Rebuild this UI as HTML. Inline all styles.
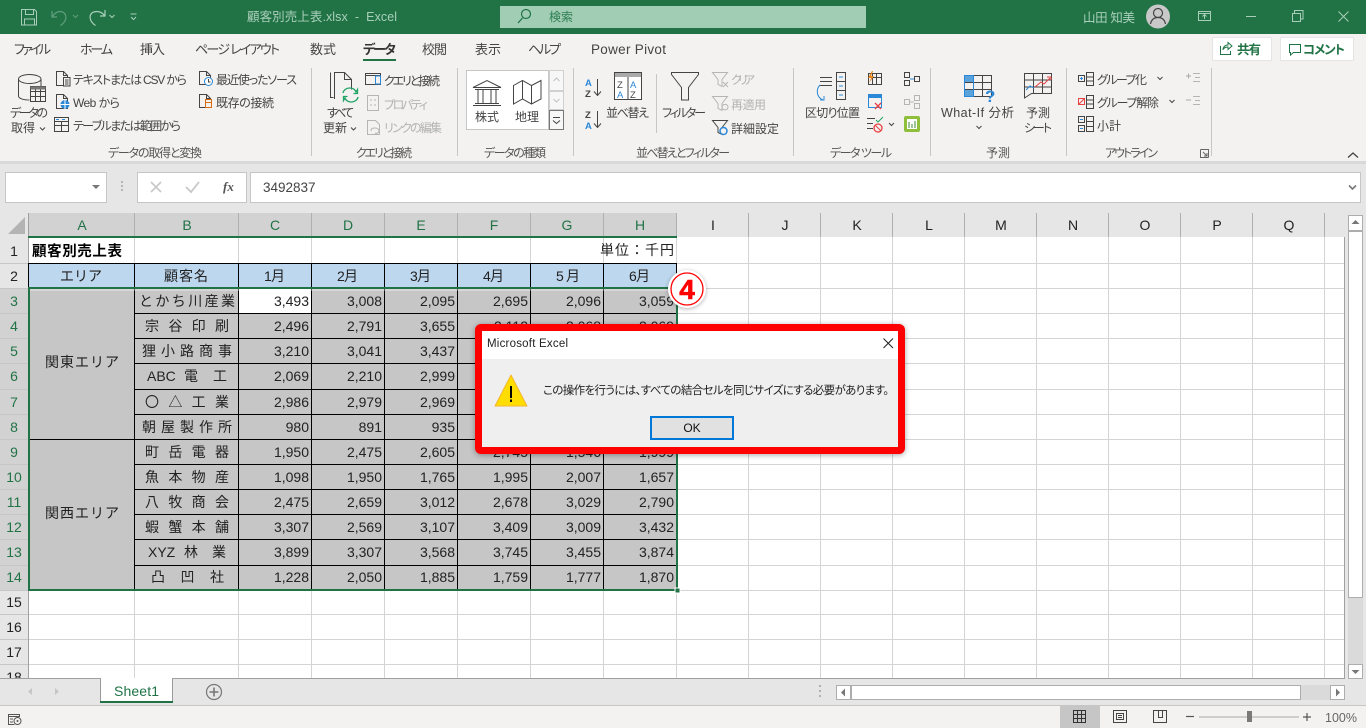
<!DOCTYPE html>
<html lang="ja"><head><meta charset="utf-8"><title>顧客別売上表.xlsx - Excel</title>
<style>
html,body{margin:0;padding:0;width:1366px;height:728px;overflow:hidden;background:#e6e6e6}
svg{display:block;position:absolute;left:0;top:0}
text{font-family:"Liberation Sans","Noto Sans CJK JP",sans-serif;font-size:12px;fill:#444;white-space:pre}
.tab{font-size:13px;fill:#444;font-feature-settings:"palt"}
.r{font-size:12px;fill:#444;font-feature-settings:"palt"}
.g{font-size:12px;fill:#b3b3b3;font-feature-settings:"palt"}
.l{font-size:12px;fill:#555;font-feature-settings:"palt"}
.h{font-size:14px;fill:#222;text-anchor:middle}
.hs{font-size:14px;fill:#217346;text-anchor:middle}
.n{font-size:14px;fill:#222;text-anchor:end}
.c{font-size:14px;fill:#222}
.i{fill:none;stroke:#444;stroke-width:1}
.b{fill:none;stroke:#2b88d8;stroke-width:1}
.m{fill:none;stroke:#b5b5b5;stroke-width:1}
.t{fill:none;stroke:#a9cfba;stroke-width:1}
</style></head><body>
<svg width="1366" height="728" viewBox="0 0 1366 728" xmlns="http://www.w3.org/2000/svg">
<!-- Title bar -->
<rect width="1366" height="34" fill="#217346"/>
<path class="t" d="M21.500 9.500h13l2 2v13.500h-15zM25.500 9.500v5h8v-5M24.500 25v-6h10v6"/>
<path fill="none" stroke="#5f9e7e" stroke-width="1.200" d="M52 11v6h5M52.500 16.500c3-5 8-6 11-4 4 3 3 9-3 13"/>
<path fill="none" stroke="#5f9e7e" d="M73 15l2.500 2.500 2.500-2.500"/>
<path fill="none" stroke="#a9cfba" stroke-width="1.200" d="M105 10v6h-5M104.500 15.500c-3-4-8-5-12-3-4 3-3 9 3 13"/>
<path fill="none" stroke="#a9cfba" d="M109.500 15l2.500 2.500 2.500-2.500M130.500 14h6M131 17l2.500 2.500 2.500-2.500"/>
<text x="247" y="21" textLength="150" style="font-size:12.500px;fill:#a9cfba">顧客別売上表.xlsx  -  Excel</text>
<rect x="500" y="6" width="366" height="22" fill="#a0cdb3"/>
<circle cx="526" cy="14" r="4.500" fill="none" stroke="#217346" stroke-width="1.200"/><path d="M522.500 18l-4.500 5" stroke="#217346" stroke-width="1.300"/>
<text x="549" y="21" style="font-size:12px;fill:#2c7d52">検索</text>
<text x="1083" y="22" textLength="52" style="font-size:12.500px;fill:#a9cfba">山田 知美</text>
<circle cx="1158" cy="16.500" r="12" fill="#c8c8c8"/>
<circle cx="1158" cy="13" r="4.500" fill="none" stroke="#444" stroke-width="1.200"/><path d="M1150.500 24c1-5 4-6.500 7.500-6.500s6.500 1.500 7.500 6.500" fill="none" stroke="#444" stroke-width="1.200"/>
<path class="t" d="M1198.500 11.500h12v9h-12zM1198.500 13.500h12M1204.500 19v-4M1202.500 16.500l2-2 2 2"/>
<path class="t" d="M1246 16.500h10"/>
<path class="t" d="M1292.500 13.500h8v8h-8zM1294.500 13v-2.500h8.500v8.500h-2.500"/>
<path class="t" d="M1338.500 11.500l10 10M1348.500 11.500l-10 10"/>
<!-- Ribbon -->
<rect y="34" width="1366" height="127" fill="#f3f2f1"/>
<rect y="161" width="1366" height="3" fill="#d9d9d9"/>
<text class="tab" x="14" y="54" textLength="37">ファイル</text>
<text class="tab" x="80" y="54" textLength="33">ホーム</text>
<text class="tab" x="140" y="54" textLength="25">挿入</text>
<text class="tab" x="195" y="54" textLength="85">ページ レイアウト</text>
<text class="tab" x="310" y="54" textLength="26">数式</text>
<text class="tab" x="363" y="54" textLength="33" style="font-weight:700;fill:#333">データ</text>
<rect x="363" y="59" width="33" height="2" fill="#217346"/>
<text class="tab" x="422" y="54" textLength="25">校閲</text>
<text class="tab" x="475" y="54" textLength="26">表示</text>
<text class="tab" x="528" y="54" textLength="33">ヘルプ</text>
<text class="tab" x="591" y="54" textLength="75" style="font-size:13.500px">Power Pivot</text>
<rect x="1212.500" y="37.500" width="59" height="23" rx="1" fill="#fff" stroke="#e4e4e4"/>
<path fill="none" stroke="#217346" d="M1220.500 46v8.500h10V51M1223 50c0-3 2-5 5-5v-2.500l4 3.500-4 3.500v-2.500c-2 0-4 1-5 2.500z"/>
<text x="1237" y="54" textLength="24" style="font-size:12.500px;font-weight:700;fill:#217346">共有</text>
<rect x="1280.500" y="37.500" width="73" height="23" rx="1" fill="#fff" stroke="#e4e4e4"/>
<path fill="none" stroke="#217346" d="M1289.500 44.500h11v8h-7l-3 2.500v-2.500h-1z"/>
<text x="1303" y="54" textLength="42" style="font-size:12.500px;font-weight:700;fill:#217346;font-feature-settings:'palt'">コメント</text>
<path fill="#c6c6c6" d="M311 68h1v88h-1zM457 68h1v88h-1zM573 68h1v88h-1zM793 68h1v88h-1zM930 68h1v88h-1zM1066 68h1v88h-1zM1211 68h1v88h-1zM656 74h1v59h-1z"/>
<!-- group labels -->
<text class="l" x="108" y="157" textLength="94">データの取得と変換</text>
<text class="l" x="356" y="157" textLength="56">クエリと接続</text>
<text class="l" x="484" y="157" textLength="62">データの種類</text>
<text class="l" x="636" y="157" textLength="94">並べ替えとフィルター</text>
<text class="l" x="830" y="157" textLength="62">データ ツール</text>
<text class="l" x="986" y="157" textLength="24">予測</text>
<text class="l" x="1105" y="157" textLength="53">アウトライン</text>
<path fill="none" stroke="#666" d="M1200.500 149.500h8v8M1200.500 149.500v8h8M1203 152l4 4M1207 153v3h-3"/>
<path fill="none" stroke="#444" stroke-width="1.300" d="M1348 157.500l5-4.500 5 4.500"/>
<!-- get data -->
<path class="i" d="M18.500 79v17c0 2.500 5 4 11 4M18.500 79c0-2.500 5-4.500 11-4.500s11.500 2 11.500 4.500-5.500 4.500-11.500 4.500-11-2-11-4.500zM41 79v7"/>
<path class="i" style="fill:#f3f2f1" d="M30.500 86.500h15v15h-15zM30.500 91.500h15M30.500 96.500h15M35.500 86.500v15M40.500 86.500v15"/>
<path d="M30.500 86.500h15v3h-15z" fill="#777"/>
<text class="r" x="10" y="117" textLength="38">データの</text>
<text class="r" x="11" y="132" textLength="24">取得</text>
<path class="i" d="M40 127.500l2.500 2.500 2.500-2.500"/>
<path class="i" d="M56.500 71.500h7l4 4v10h-11zM63.500 71.500v4h4"/><path class="i" d="M63.500 77.500h6.500v8.500h-6.500zM65 80h3.500M65 82h3.500M65 84h3.500" style="fill:#f3f2f1"/>
<text class="r" x="73" y="84" textLength="114">テキストまたは CSV から</text>
<path class="i" d="M56.500 94.500h7l4 4v10h-11zM63.500 94.500v4h4"/><circle cx="65" cy="104.500" r="4.500" fill="#2b88d8"/><path d="M60.500 104.500h9M65 100v9" stroke="#fff"/>
<text class="r" x="73" y="107" textLength="47">Web から</text>
<path class="i" d="M54.500 117.500h14v14h-14zM54.500 121.500h14M54.500 125.500h14M61.500 121.500v10"/>
<path d="M56 119h3v1h-3zM62 119h3v1h-3z" fill="#2b88d8"/>
<text class="r" x="73" y="130" textLength="108">テーブルまたは範囲から</text>
<path class="i" d="M199.500 71.500h7l4 4v9h-11zM206.500 71.500v4h4"/><circle cx="208.500" cy="81.500" r="4" fill="#fff" stroke="#2b88d8"/><path d="M208.500 79v3h2" fill="none" stroke="#444"/>
<text class="r" x="216" y="84" textLength="81">最近使ったソース</text>
<path class="i" d="M199.500 94.500h7l4 4v9h-11zM206.500 94.500v4h4"/><rect x="205.500" y="99.500" width="6" height="8" fill="#f3f2f1" stroke="#d86b10"/><path d="M205.500 102.500h6" stroke="#d86b10"/>
<text class="r" x="216" y="107" textLength="58">既存の接続</text>
<!-- queries -->
<path class="i" d="M330.500 72.500v25h3M334.500 99v-26.500h10l7 7v10M344.500 72.500v7h7"/>
<path fill="none" stroke="#21a366" stroke-width="1.300" d="M343 93c1-6 11-7 13-1l1.500-2.500v4h-4M358 97c-1 6-11 7-13 1l-1.500 2.500v-4h4"/>
<text class="r" x="327" y="117" textLength="27">すべて</text>
<text class="r" x="323" y="132" textLength="24">更新</text>
<path class="i" d="M351 127.500l2.500 2.500 2.500-2.500"/>
<path class="i" d="M365.500 73.500h15v11h-15zM365.500 75.500h15"/><path d="M375.500 76h5v8h-5z" fill="none" stroke="#2b88d8"/>
<text class="r" x="384" y="85" textLength="56">クエリと接続</text>
<path class="m" d="M367.500 95.500h11v15h-11zM370 100h2M370 105h2M374 100h2M374 105h2"/>
<text class="g" x="384" y="109" textLength="44">プロパティ</text>
<path class="m" d="M367.500 120.500h8l4 4v10h-12zM371 131c0-3 2-3 4-3s4 1 4 3-3 3-4 2"/>
<text class="g" x="384" y="132" textLength="58">リンクの編集</text>
<!-- data types -->
<rect x="466.500" y="70.500" width="82" height="59" fill="#fff" stroke="#c6c6c6"/>
<path class="i" d="M473 87.500l14-7 14 7zM475 89.500h24M478 90v13M483 90v13M491 90v13M496 90v13M475 103.500h24M473 105.500h28"/>
<path class="i" d="M513.500 85.500l9-5 9 5 9.500-5v18.500l-9.500 5-9-5-9 5zM522.500 80.500v18.500M531.500 85.500v18.500"/>
<text class="r" x="475" y="121" textLength="24">株式</text>
<text class="r" x="515" y="121" textLength="24">地理</text>
<path fill="#f7f7f7" stroke="#d0d0d0" d="M549.500 70.500h14v20h-14zM549.500 91.500h14v18h-14z"/>
<path fill="#f7f7f7" stroke="#777" d="M549.500 110.500h14v19h-14z"/>
<path fill="none" stroke="#c2c2c2" d="M553.500 81l3-3 3 3M553.500 99l3 3 3-3"/>
<path fill="none" stroke="#444" d="M553 117.500h7M553 120.500l3.500 3 3.500-3"/>
<!-- sort -->
<text x="585" y="86" style="font-size:9.500px;font-weight:700;fill:#2b88d8">A</text><text x="585" y="97" style="font-size:9.500px;font-weight:700;fill:#444">Z</text>
<path class="i" d="M597.500 79v16M594 91.500l3.500 4 3.500-4"/>
<text x="585" y="118" style="font-size:9.500px;font-weight:700;fill:#444">Z</text><text x="585" y="129" style="font-size:9.500px;font-weight:700;fill:#2b88d8">A</text>
<path class="i" d="M597.500 111v16M594 123.500l3.500 4 3.500-4"/>
<rect x="614.500" y="72.500" width="27" height="27" fill="#fff" stroke="#444"/><rect x="615" y="73" width="26" height="4" fill="#aaa"/><path class="i" d="M628 77v22"/>
<text x="617" y="88" style="font-size:9.500px;fill:#444">Z</text><text x="617" y="98" style="font-size:9.500px;fill:#2b88d8">A</text>
<text x="630" y="88" style="font-size:9.500px;fill:#2b88d8">A</text><text x="630" y="98" style="font-size:9.500px;fill:#444">Z</text>
<text class="r" x="606" y="117" textLength="43">並べ替え</text>
<path class="i" d="M671.500 72.500h27v2l-10 13v12.500h-7v-12.500l-10-13z"/>
<text class="r" x="662" y="117" textLength="44">フィルター</text>
<path class="m" d="M712.500 72.500h15l-5.500 7v7l-4-2v-5z"/><path d="M723 82l5 5M728 82l-5 5" stroke="#b5b5b5"/>
<text class="g" x="731" y="84" textLength="24">クリア</text>
<path class="m" d="M712.500 96.500h15l-5.500 7v7l-4-2v-5zM722 107c1-4 6-3 6 0s-4 4-6 1"/>
<text class="g" x="731" y="109" textLength="35">再適用</text>
<path class="i" d="M712.500 120.500h15l-5.500 7v7l-4-2v-5z"/><circle cx="723.500" cy="131" r="3.500" fill="#f3f2f1" stroke="#2b88d8" stroke-width="1.500"/>
<text class="r" x="731" y="133" textLength="48">詳細設定</text>
<!-- data tools -->
<path class="i" d="M820 77.500h12M820 81.500h12M820 85.500h12"/><path fill="none" stroke="#2b88d8" d="M820 85c-4 4-4 12 3 15M820 100h4v-4"/>
<path class="i" d="M836.500 72.500h9v27h-9zM836.500 81.500h9M836.500 90.500h9"/><path d="M839 77h4M839 86h4M839 95h4" stroke="#2b88d8"/>
<text class="r" x="805" y="117" textLength="55">区切り位置</text>
<path class="i" d="M868.500 73.500h13v11h-13zM868.500 77.500h13M872.500 73.500v11M876.500 73.500v11"/><path d="M872 71l-4 7h3l-2 5 5-7h-3l2-5z" fill="#e8841a"/>
<path d="M868 94h14v4h-14z" fill="#2b88d8"/><path class="i" style="stroke:#2b88d8" d="M868.500 94.500h13v13h-13z"/><path d="M875 103l6 6M881 103l-6 6" stroke="#e84040" stroke-width="1.300"/>
<path class="i" d="M867 118.500h8M867 123.500h6M867 128.500h6"/><path d="M876 120l2 2 5-5" fill="none" stroke="#21a366"/><circle cx="878" cy="128" r="4" fill="none" stroke="#e84040" stroke-width="1.300"/><path d="M875 125l6 6" stroke="#e84040"/>
<path class="i" d="M889 123l2.500 2.500 2.500-2.500"/>
<path class="i" d="M904.500 72.500h5v5h-5zM904.500 80.500h5v5h-5zM914.500 76.500h5v5h-5z"/><path d="M910 79h4" stroke="#2b88d8"/>
<path class="m" d="M904.500 99.500h5v5h-5zM914.500 95.500h5v5h-5zM914.500 103.500h5v5h-5zM910 102h4"/>
<rect x="904" y="116" width="16" height="16" rx="2" fill="#8fbf3b"/><rect x="907" y="119" width="10" height="10" fill="#fff"/><path d="M909 122v6M912 124v4M915 121v7" stroke="#3c8a2e"/>
<!-- forecast -->
<path class="i" d="M964.500 75.500h27v21h-27zM964.500 82.500h27M964.500 89.500h27M973.500 75.500v21M982.500 75.500v21"/>
<path d="M965 76h8v6h-8zM965 90h8v6h-8z" fill="#5ba3dd"/>
<rect x="964.500" y="75.500" width="9" height="21" fill="none" stroke="#2b88d8"/>
<text x="985" y="102" style="font-size:17px;font-weight:700;fill:#2b88d8">?</text>
<text class="r" x="941" y="117" textLength="73" style="font-size:12.500px">What-If 分析</text>
<path class="i" d="M976.500 126l2.500 2.500 2.500-2.500"/>
<path class="i" d="M1024.500 73.500h27v20h-20l-7 4.500zM1024.500 80h27M1024.500 87h27M1033.500 73.500v20M1042.500 73.500v20"/>
<path fill="none" stroke="#e84040" d="M1035 87l6-5 3 2 6-6M1047 77h4v3"/><path fill="none" stroke="#2b88d8" d="M1026 90l4-4 4 2"/>
<text class="r" x="1026" y="117" textLength="24">予測</text>
<text class="r" x="1024" y="132" textLength="28">シート</text>
<!-- outline -->
<path class="i" d="M1078.500 75.500h6v6h-6zM1086.500 72.500h7v13h-7zM1086.500 77h7M1086.500 81h7"/><path d="M1080 78.500h3M1081.500 77v3" stroke="#2b88d8"/>
<text class="r" x="1097" y="84" textLength="50">グループ化</text>
<path class="i" d="M1157.500 77l2.500 2.500 2.500-2.500"/>
<path d="M1186 76h5M1188.500 73.500v5" stroke="#aaa"/><path class="m" d="M1193 73.500h7M1195 77.500h5M1193 81.500h7"/>
<path d="M1078.500 98.500h6v6h-6zM1079 104l5-5" fill="none" stroke="#e84040"/><path class="i" d="M1086.500 95.500h7v13h-7zM1086.500 100h7M1086.500 104h7"/>
<text class="r" x="1097" y="107" textLength="62">グループ解除</text>
<path class="i" d="M1169.500 100l2.500 2.500 2.500-2.500"/>
<path d="M1186 100h5" stroke="#aaa"/><path class="m" d="M1193 96.500h7M1195 100.500h5M1193 104.500h7"/>
<path class="i" d="M1078.500 116.500h6v6h-6zM1078.500 125.500h6v6h-6zM1086.500 116.500h7v15h-7zM1086.500 121.500h7M1086.500 126.500h7"/><path d="M1080 119.500h3M1080 128.500h3" stroke="#2b88d8"/>
<text class="r" x="1097" y="130" textLength="24">小計</text>
<!-- Formula bar -->
<rect x="5.500" y="172.500" width="101" height="30" fill="#fff" stroke="#c6c6c6"/>
<path d="M92 185h8l-4 4z" fill="#777"/>
<path d="M121 181h2v2h-2zM121 185h2v2h-2zM121 189h2v2h-2z" fill="#b5b5b5"/>
<rect x="137.500" y="172.500" width="109" height="30" fill="#fff" stroke="#c6c6c6"/>
<path d="M151 182l10 10M161 182l-10 10" stroke="#c8c8c8" stroke-width="1.600"/>
<path d="M186 187l5 5 8-10" fill="none" stroke="#c8c8c8" stroke-width="1.800"/>
<text x="223" y="191" style="font-family:'Liberation Serif',serif;font-style:italic;font-weight:700;font-size:13px;fill:#555">fx</text>
<rect x="250.500" y="172.500" width="1110" height="30" fill="#fff" stroke="#c6c6c6"/>
<text x="263" y="192" style="font-size:13.500px;fill:#444">3492837</text>
<path d="M1349 185.500l3.500 3.500 3.500-3.500" fill="none" stroke="#777" stroke-width="1.600"/>
<!-- Sheet grid -->
<rect x="28" y="237" width="1317" height="441" fill="#fff"/>
<rect x="0" y="213" width="1345" height="24" fill="#e6e6e6"/>
<rect x="28" y="213" width="648" height="23" fill="#d2d2d2"/>
<rect x="0" y="237" width="28" height="441" fill="#e6e6e6"/>
<rect x="0" y="288" width="28" height="302" fill="#d2d2d2"/>
<path d="M25 217v17H8z" fill="#b4b4b4"/>
<g shape-rendering="crispEdges">
<path stroke="#d4d4d4" fill="none" d="M28 263.500h1317M28 288.500h1317M28 313.500h1317M28 338.500h1317M28 363.500h1317M28 389.500h1317M28 414.500h1317M28 439.500h1317M28 464.500h1317M28 489.500h1317M28 514.500h1317M28 539.500h1317M28 565.500h1317M28 590.500h1317M28 614.500h1317M28 639.500h1317M28 664.500h1317"/>
<path stroke="#d4d4d4" fill="none" d="M134.500 237v441M238.500 237v441M311.500 237v441M384.500 237v441M457.500 237v441M530.500 237v441M603.500 237v441M676.500 237v441M748.500 237v441M820.500 237v441M892.500 237v441M964.500 237v441M1036.500 237v441M1108.500 237v441M1180.500 237v441M1252.500 237v441M1324.500 237v441"/>
<path stroke="#b0b0b0" fill="none" d="M134.500 213v24M238.500 213v24M311.500 213v24M384.500 213v24M457.500 213v24M530.500 213v24M603.500 213v24M676.500 213v24M748.500 213v24M820.500 213v24M892.500 213v24M964.500 213v24M1036.500 213v24M1108.500 213v24M1180.500 213v24M1252.500 213v24M1324.500 213v24"/>
<path stroke="#c6c6c6" fill="none" d="M0 263.500h28M0 288.500h28M0 313.500h28M0 338.500h28M0 363.500h28M0 389.500h28M0 414.500h28M0 439.500h28M0 464.500h28M0 489.500h28M0 514.500h28M0 539.500h28M0 565.500h28M0 590.500h28M0 614.500h28M0 639.500h28M0 664.500h28"/>
<path stroke="#a0a0a0" fill="none" d="M28.500 213v24M28.500 590v88M1344.500 237v442M28 678.500h1317M28.500 237v51"/>
<!-- header band -->
<rect x="29" y="264" width="647" height="24" fill="#bdd7ee"/>
<!-- gray selection -->
<rect x="29" y="289" width="647" height="301" fill="#c6c6c6"/>
<rect x="239" y="289" width="72" height="24" fill="#fff"/>
<!-- black table borders -->
<path stroke="#000" fill="none" d="M28 263.500h649M28 288.500h649M134 313.500h543M134 338.500h543M134 363.500h543M134 389.500h543M134 414.500h543M28 439.500h649M134 464.500h543M134 489.500h543M134 514.500h543M134 539.500h543M134 565.500h543"/>
<path stroke="#000" fill="none" d="M134.500 263v327M238.500 263v327M311.500 263v327M384.500 263v327M457.500 263v327M530.500 263v327M603.500 263v327M676.500 263v25M28.500 263v25"/>
<!-- selection border -->
<rect x="28" y="236" width="649" height="2" fill="#217346"/>
<rect x="29" y="288" width="648" height="302" fill="none" stroke="#217346" stroke-width="2"/>
<rect x="30" y="289.500" width="646" height="1" fill="#fff" opacity=".6"/>
<rect x="675" y="588" width="5" height="5" fill="#217346" stroke="#fff" stroke-width="1"/>
</g>
<!-- col headers -->
<text class="hs" x="82" y="230">A</text><text class="hs" x="187" y="230">B</text><text class="hs" x="275" y="230">C</text><text class="hs" x="348" y="230">D</text><text class="hs" x="421" y="230">E</text><text class="hs" x="494" y="230">F</text><text class="hs" x="567" y="230">G</text><text class="hs" x="640" y="230">H</text>
<text class="h" x="713" y="230">I</text><text class="h" x="785" y="230">J</text><text class="h" x="857" y="230">K</text><text class="h" x="929" y="230">L</text><text class="h" x="1001" y="230">M</text><text class="h" x="1073" y="230">N</text><text class="h" x="1145" y="230">O</text><text class="h" x="1217" y="230">P</text><text class="h" x="1289" y="230">Q</text>
<!-- row headers -->
<text class="h" x="14" y="256">1</text><text class="h" x="14" y="281">2</text>
<text class="hs" x="14" y="306">3</text><text class="hs" x="14" y="331">4</text><text class="hs" x="14" y="356">5</text><text class="hs" x="14" y="381">6</text><text class="hs" x="14" y="407">7</text><text class="hs" x="14" y="432">8</text><text class="hs" x="14" y="457">9</text><text class="hs" x="14" y="482">10</text><text class="hs" x="14" y="507">11</text><text class="hs" x="14" y="532">12</text><text class="hs" x="14" y="557">13</text><text class="hs" x="14" y="582">14</text>
<text class="h" x="14" y="607">15</text><text class="h" x="14" y="632">16</text><text class="h" x="14" y="657">17</text>
<svg x="0" y="664" width="28" height="14"><text class="h" x="14" y="18">18</text></svg>
<!-- cells -->
<text class="c" x="32" y="256" textLength="90" style="font-weight:700;font-size:14.500px;fill:#000">顧客別売上表</text>
<text class="c" x="600" y="255" textLength="74">単位：千円</text>
<text class="c" x="60" y="281" textLength="42">エリア</text>
<text class="c" x="164" y="281" textLength="44">顧客名</text>
<text class="c" x="264" y="281" textLength="21">1月</text>
<text class="c" x="337" y="281" textLength="21">2月</text>
<text class="c" x="410" y="281" textLength="21">3月</text>
<text class="c" x="483" y="281" textLength="21">4月</text>
<text class="c" x="556" y="281" textLength="24">5 月</text>
<text class="c" x="629" y="281" textLength="21">6月</text>
<text class="c" x="45" y="367" textLength="74">関東エリア</text>
<text class="c" x="45" y="518" textLength="74">関西エリア</text>
<text class="c" x="139" y="306" textLength="96">とかち川産業</text>
<text class="c" x="145" y="331" textLength="84">宗 谷 印 刷</text>
<text class="c" x="142" y="356" textLength="90">狸 小 路 商 事</text>
<text class="c" x="147" y="381">ABC</text><text class="c" x="184" y="381">電</text><text class="c" x="213" y="381">工</text>
<text class="c" x="145" y="407" textLength="84">〇 △ 工 業</text>
<text class="c" x="142" y="432" textLength="90">朝 屋 製 作 所</text>
<text class="c" x="145" y="457" textLength="84">町 岳 電 器</text>
<text class="c" x="145" y="482" textLength="84">魚 本 物 産</text>
<text class="c" x="145" y="507" textLength="84">八 牧 商 会</text>
<text class="c" x="145" y="532" textLength="84">蝦 蟹 本 舗</text>
<text class="c" x="148" y="557">XYZ</text><text class="c" x="184" y="557">林</text><text class="c" x="212" y="557">業</text>
<text class="c" x="151" y="582" textLength="73">凸 凹 社</text>
<g>
<text class="n" x="309" y="306">3,493</text><text class="n" x="382" y="306">3,008</text><text class="n" x="455" y="306">2,095</text><text class="n" x="528" y="306">2,695</text><text class="n" x="601" y="306">2,096</text><text class="n" x="674" y="306">3,059</text>
<text class="n" x="309" y="331">2,496</text><text class="n" x="382" y="331">2,791</text><text class="n" x="455" y="331">3,655</text><text class="n" x="528" y="331">2,112</text><text class="n" x="601" y="331">2,068</text><text class="n" x="674" y="331">2,069</text>
<text class="n" x="309" y="356">3,210</text><text class="n" x="382" y="356">3,041</text><text class="n" x="455" y="356">3,437</text>
<text class="n" x="309" y="381">2,069</text><text class="n" x="382" y="381">2,210</text><text class="n" x="455" y="381">2,999</text>
<text class="n" x="309" y="407">2,986</text><text class="n" x="382" y="407">2,979</text><text class="n" x="455" y="407">2,969</text>
<text class="n" x="309" y="432">980</text><text class="n" x="382" y="432">891</text><text class="n" x="455" y="432">935</text>
<text class="n" x="309" y="457">1,950</text><text class="n" x="382" y="457">2,475</text><text class="n" x="455" y="457">2,605</text><text class="n" x="528" y="457">2,745</text><text class="n" x="601" y="457">1,546</text><text class="n" x="674" y="457">1,999</text>
<text class="n" x="309" y="482">1,098</text><text class="n" x="382" y="482">1,950</text><text class="n" x="455" y="482">1,765</text><text class="n" x="528" y="482">1,995</text><text class="n" x="601" y="482">2,007</text><text class="n" x="674" y="482">1,657</text>
<text class="n" x="309" y="507">2,475</text><text class="n" x="382" y="507">2,659</text><text class="n" x="455" y="507">3,012</text><text class="n" x="528" y="507">2,678</text><text class="n" x="601" y="507">3,029</text><text class="n" x="674" y="507">2,790</text>
<text class="n" x="309" y="532">3,307</text><text class="n" x="382" y="532">2,569</text><text class="n" x="455" y="532">3,107</text><text class="n" x="528" y="532">3,409</text><text class="n" x="601" y="532">3,009</text><text class="n" x="674" y="532">3,432</text>
<text class="n" x="309" y="557">3,899</text><text class="n" x="382" y="557">3,307</text><text class="n" x="455" y="557">3,568</text><text class="n" x="528" y="557">3,745</text><text class="n" x="601" y="557">3,455</text><text class="n" x="674" y="557">3,874</text>
<text class="n" x="309" y="582">1,228</text><text class="n" x="382" y="582">2,050</text><text class="n" x="455" y="582">1,885</text><text class="n" x="528" y="582">1,759</text><text class="n" x="601" y="582">1,777</text><text class="n" x="674" y="582">1,870</text>
</g>
<!-- vertical scrollbar -->
<g shape-rendering="crispEdges">
<rect x="1348" y="231" width="15" height="433" fill="#dadada"/>
<rect x="1348.500" y="215.500" width="14" height="15" fill="#fff" stroke="#adadad"/>
<rect x="1348.500" y="231.500" width="14" height="366" fill="#fff" stroke="#adadad"/>
<rect x="1348.500" y="664.500" width="14" height="14" fill="#fff" stroke="#adadad"/>
</g>
<path d="M1355.500 220l4 4h-8z" fill="#777"/>
<path d="M1351.500 670h8l-4 4z" fill="#777"/>
<!-- sheet tabs -->
<rect y="679" width="1366" height="27" fill="#e6e6e6"/>
<rect y="705" width="1366" height="1" fill="#c6c6c6"/>
<path d="M32 688v7l-4-3.500zM55 688v7l4-3.500z" fill="#c6c6c6"/>
<path d="M100.500 678.500V702M172.500 678.500V702" stroke="#9a9a9a" fill="none"/>
<rect x="101" y="678" width="71" height="24" fill="#fff"/>
<rect x="100" y="701" width="73" height="2" fill="#217346"/>
<path d="M0 678.500h100M173 678.500h1172" stroke="#a0a0a0"/>
<text x="114" y="696" textLength="45" style="font-size:14px;fill:#217346">Sheet1</text>
<circle cx="214" cy="692" r="7.500" fill="none" stroke="#777" stroke-width="1.200"/><path d="M209.500 692h9M214 687.500v9" stroke="#777" stroke-width="1.600"/>
<path d="M819 685h2v2h-2zM819 690h2v2h-2zM819 695h2v2h-2z" fill="#b0b0b0"/>
<!-- horizontal scrollbar -->
<g shape-rendering="crispEdges">
<rect x="851" y="685" width="480" height="15" fill="#dadada"/>
<rect x="836.500" y="685.500" width="14" height="14" fill="#fff" stroke="#adadad"/>
<rect x="851.500" y="685.500" width="449" height="14" fill="#fff" stroke="#adadad"/>
<rect x="1330.500" y="685.500" width="14" height="14" fill="#fff" stroke="#adadad"/>
</g>
<path d="M841 692.500l4-4v8zM1340 692.500l-4-4v8z" fill="#777"/>
<!-- status bar -->
<rect y="706" width="1366" height="22" fill="#f3f2f1"/>
<path class="i" style="stroke:#555" d="M8.500 714.500h11v2h-11zM8.500 716.500v8h6M10 719h3M10 722h3"/><circle cx="17.500" cy="721" r="3.500" fill="none" stroke="#555"/><circle cx="17.500" cy="721" r="1" fill="#555"/>
<rect x="1060" y="706" width="40" height="22" fill="#c6c6c6"/>
<path fill="none" stroke="#333" shape-rendering="crispEdges" d="M1073.500 710.500h12v12h-12zM1073.500 714.500h12M1073.500 718.500h12M1077.500 710.500v12M1081.500 710.500v12"/>
<path fill="none" stroke="#444" shape-rendering="crispEdges" d="M1113.500 710.500h13v12h-13zM1116.500 713.500h7v6h-7zM1118 715.500h4M1118 717.500h4"/>
<path fill="none" stroke="#444" shape-rendering="crispEdges" d="M1153.500 710.500h13v12h-13zM1158.500 710.500v7h4v-7"/>
<path d="M1186 716.500h8" stroke="#555" stroke-width="1.200"/>
<path d="M1199 717h100" stroke="#aaa"/>
<rect x="1247" y="711" width="5" height="11" fill="#7a7a7a"/>
<path d="M1303 717h8M1307 713v8" stroke="#555" stroke-width="1.200"/>
<text x="1325" y="722" textLength="32" style="font-size:12.500px;fill:#666">100%</text>
<!-- callout 4 -->
<circle cx="687" cy="289" r="19" fill="#fff" style="filter:drop-shadow(0 1px 2px rgba(0,0,0,.3))"/>
<circle cx="687" cy="289" r="16" fill="#fff" stroke="#f00" stroke-width="1.300"/>
<text x="687" y="299" text-anchor="middle" style="font-size:28px;font-weight:700;fill:#f00;stroke:#f00;stroke-width:.6">4</text>
<!-- dialog -->
<rect x="475" y="324" width="430" height="130" rx="6" fill="#f00" style="filter:drop-shadow(0 1px 3px rgba(0,0,0,.35))"/>
<rect x="482" y="331" width="416" height="116" fill="#efefef"/>
<rect x="482" y="331" width="416" height="28" fill="#fff"/>
<text x="487" y="347" textLength="81" style="font-size:11.500px;fill:#222">Microsoft Excel</text>
<path d="M883.500 338.500l9.500 9.500M893 338.500l-9.500 9.500" stroke="#222" stroke-width="1"/>
<path d="M511 375l16 31h-32z" fill="#ffdd00" stroke="#f2b632" stroke-linejoin="round"/>
<rect x="510" y="386" width="2" height="12" fill="#000"/><rect x="510" y="399.500" width="2" height="2.500" fill="#000"/>
<text x="543" y="394" textLength="346" style="font-size:11.500px;fill:#222;font-feature-settings:'palt'">この操作を行うには、すべての結合セルを同じサイズにする必要があります。</text>
<rect x="651" y="417" width="82" height="22" fill="#e1e1e1" stroke="#0078d7" stroke-width="2"/>
<text x="692" y="432" text-anchor="middle" style="font-size:12px;fill:#111">OK</text>
</svg>
</body></html>
